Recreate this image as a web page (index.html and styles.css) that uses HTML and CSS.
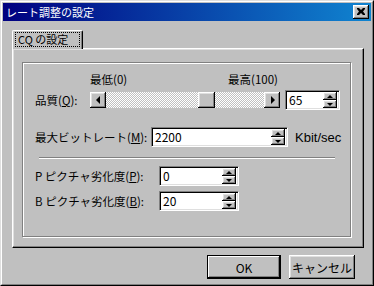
FILE: index.html
```html
<!DOCTYPE html>
<html lang="ja">
<head>
  <meta charset="UTF-8"/>
  <title>レート調整の設定</title>
  <link rel="stylesheet" href="styles.css">
</head>
<body>
  <div class="window">
    <div class="frame">
      <!-- barre de titre -->
      <div class="titlebar">
        <span class="title">レート調整の設定</span>
        <span class="btn close-btn">
          <svg width="8" height="7" viewBox="0 0 8 7"><path d="M0 0h2l2 2 2-2h2v1l-2 2.5 2 2.5v1h-2l-2-2-2 2h-2v-1l2-2.5-2-2.5z" fill="#000"/></svg>
        </span>
      </div>

      <div class="content">
        <div class="tabs">
          <div class="tab active"><span class="focus">CQ の設定</span></div>
        </div>

        <div class="panel">
          <div class="group">
            <div class="captions"><span>最低(0)</span><span>最高(100)</span></div>

            <div class="row row-q">
              <label class="lbl lbl-q">品質(<u>Q</u>):</label>
              <div class="slider">
                <span class="btn sbtn"><i class="arr arr-left"></i></span>
                <div class="track">
                  <span class="btn thumb" style="margin-left:calc((100% - 17px) * 0.65)"></span>
                </div>
                <span class="btn sbtn"><i class="arr arr-right"></i></span>
              </div>
              <div class="field spin spin-q">
                <span class="val">65</span>
                <span class="spinner"><span class="btn sp"><i class="arr arr-up"></i></span><span class="btn sp"><i class="arr arr-down"></i></span></span>
              </div>
            </div>

            <div class="row row-m">
              <label class="lbl lbl-m">最大ビットレート(<u>M</u>):</label>
              <div class="field spin spin-m">
                <span class="val">2200</span>
                <span class="spinner"><span class="btn sp"><i class="arr arr-up"></i></span><span class="btn sp"><i class="arr arr-down"></i></span></span>
              </div>
              <span class="unit">Kbit/sec</span>
            </div>

            <div class="sep"></div>

            <div class="row row-p">
              <label class="lbl lbl-pb">P ピクチャ劣化度(<u>P</u>):</label>
              <div class="field spin spin-pb">
                <span class="val">0</span>
                <span class="spinner"><span class="btn sp"><i class="arr arr-up"></i></span><span class="btn sp"><i class="arr arr-down"></i></span></span>
              </div>
            </div>

            <div class="row row-b">
              <label class="lbl lbl-pb">B ピクチャ劣化度(<u>B</u>):</label>
              <div class="field spin spin-pb">
                <span class="val">20</span>
                <span class="spinner"><span class="btn sp"><i class="arr arr-up"></i></span><span class="btn sp"><i class="arr arr-down"></i></span></span>
              </div>
            </div>
          </div>
        </div>

        <div class="actions">
          <button class="btn push default">OK</button>
          <button class="btn push cancel">キャンセル</button>
        </div>
      </div>
    </div>
  </div>
</body>
</html>
```

FILE: styles.css
```css
body { margin:0; background:#c0c0c0;
       font-family:"Noto Sans CJK JP", "Liberation Sans", sans-serif; font-size:11.5px; color:#000 }
.window { width:374px; height:286px; box-sizing:border-box; background:#c0c0c0;
          border:1px solid; border-color:#dfdfdf #000 #000 #dfdfdf }
.frame { height:100%; box-sizing:border-box; padding:1px;
         border:1px solid; border-color:#fff #808080 #808080 #fff }

/* barre de titre */
.titlebar { height:18px; display:flex; align-items:center; justify-content:space-between;
            background:linear-gradient(to right, #000080, #1084d0); padding:0 2px 0 3px }
.title { color:#fff; font-size:11px; line-height:18px }

/* bouton relief */
.btn { background:#c0c0c0; box-sizing:border-box;
       box-shadow:inset -1px -1px #000, inset 1px 1px #fff, inset -2px -2px #808080, inset 2px 2px #dfdfdf }
.close-btn { width:16px; height:14px; display:flex; align-items:center; justify-content:center; padding:0 1px 1px 0 }

.content { padding:9px 0 0 9px }

/* onglets */
.tabs { display:flex; height:18px; position:relative; z-index:1 }
.tab { width:71px; height:19px; box-sizing:border-box; background:#c0c0c0;
       border-top:1px solid #fff; border-left:1px solid #fff; border-right:1px solid #000;
       border-top-left-radius:2px; border-top-right-radius:2px;
       box-shadow:inset -1px 0 #808080; padding:1px 2px 0 2px }
.focus { display:block; height:15px; line-height:15px; outline:1px dotted #000; outline-offset:-1px;
         padding-left:3px; font-size:11px }

.panel { width:352px; height:200px; box-sizing:border-box;
         border:1px solid; border-color:#fff #000 #000 #fff;
         box-shadow:inset -1px -1px #808080, inset 1px 1px #dfdfdf; padding:13px 0 0 9px }

/* cadre grave */
.group { width:329px; height:175px; box-sizing:border-box; border:1px solid #808080;
         box-shadow:1px 1px 0 #fff, inset 1px 1px 0 #fff; padding:9px 0 0 12px }

.captions { display:flex; justify-content:space-between; width:190px; margin-left:55px;
            padding-right:2px; box-sizing:border-box; line-height:14px }
.row { display:flex; align-items:center; height:20px }
.row-q { margin-top:4px }
.row-m { margin-top:17px }
.row-p { margin-top:7px }
.row-b { margin-top:5px }
.lbl { line-height:14px; white-space:nowrap; flex-shrink:0 }
.lbl-q { width:55px }
.lbl-m { width:116px }
.lbl-pb { width:124px }

/* curseur */
.slider { display:flex; width:190px; height:16px }
.sbtn { width:16px; height:16px; display:flex; align-items:center; justify-content:center }
.track { flex:1; display:flex;
         background:repeating-conic-gradient(#c0c0c0 0 25%, #fff 0 50%) 0 0/2px 2px }
.thumb { width:17px; height:16px }

.arr { display:block; width:0; height:0; border:solid transparent }
.arr-left { border-width:4px 4px 4px 0; border-right-color:#000 }
.arr-right { border-width:4px 0 4px 4px; border-left-color:#000; margin-left:1px }
.arr-up { border-width:0 3px 3px; border-bottom-color:#000 }
.arr-down { border-width:3px 3px 0; border-top-color:#000 }

/* champs */
.field { height:20px; box-sizing:border-box; background:#fff; display:flex; align-items:center;
         border:1px solid; border-color:#808080 #fff #fff #808080;
         box-shadow:inset 1px 1px #000, inset -1px -1px #dfdfdf; padding:2px 2px 2px 3px; flex-shrink:0 }
.val { flex:1; line-height:14px; font-size:12px }
.spin-q { width:55px; margin-left:5px }
.spin-m { width:137px }
.spin-pb { width:80px }
.spinner { display:flex; flex-direction:column; width:14px; height:16px }
.sp { height:8px; display:flex; align-items:center; justify-content:center }
.unit { margin-left:7px; font-family:"Liberation Sans", sans-serif; font-size:13px; white-space:nowrap }

.sep { width:296px; margin:10px 0 0 4px; border-top:1px solid #808080; border-bottom:1px solid #fff }

/* boutons */
.actions { width:352px; display:flex; justify-content:flex-end; gap:8px; margin-top:7px;
           padding-right:9px; box-sizing:border-box }
.push { height:24px; border:none; font-family:"Noto Sans CJK JP", sans-serif; font-size:12px; padding:0 }
.default { width:74px; outline:1px solid #000; outline-offset:-1px;
           box-shadow:inset 0 0 0 1px #000, inset -2px -2px #000, inset 2px 2px #fff, inset -3px -3px #808080 }
.cancel { width:66px }
```
